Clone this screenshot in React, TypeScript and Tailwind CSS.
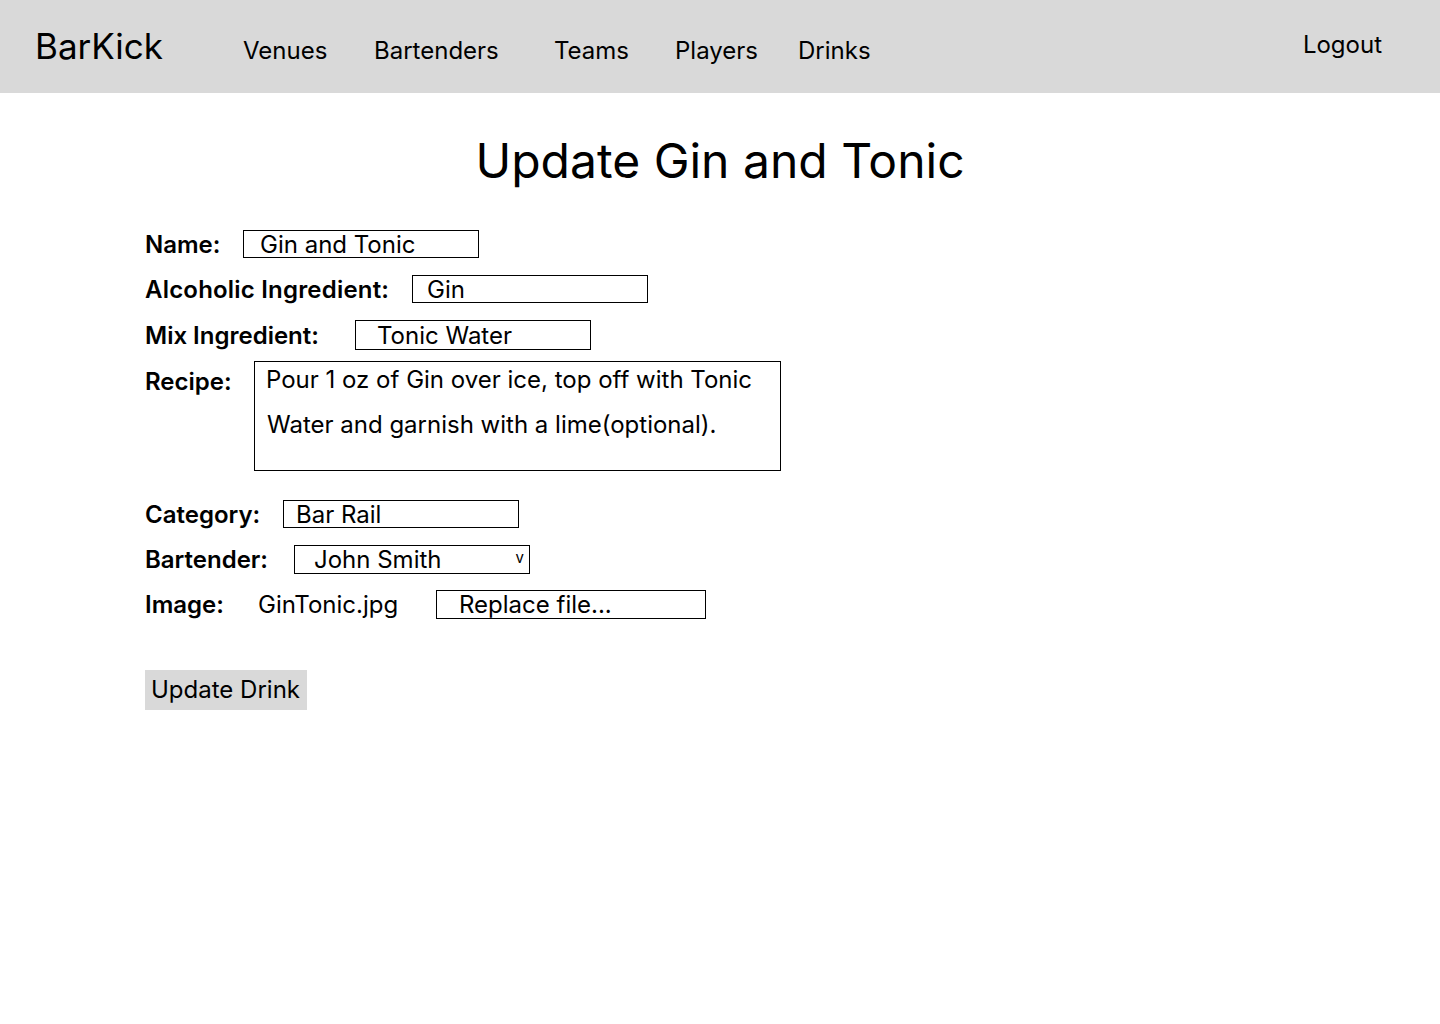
import React from "react";

const font = { fontFamily: "Inter, 'Noto Sans', sans-serif" };

export default function App() {
  return (
    <div className="min-h-[1024px] w-[1440px] bg-white text-black" style={font}>
      <header className="flex h-[93px] items-center bg-[#d9d9d9]">
        <div className="ml-[35px] w-[208px] text-[35px] leading-none pt-[0px]">BarKick</div>
        <nav className="flex items-center text-[24px] leading-none pt-[8px]">
          <span className="w-[131px]">Venues</span>
          <span className="w-[180px]">Bartenders</span>
          <span className="w-[121px]">Teams</span>
          <span className="w-[123px]">Players</span>
          <span>Drinks</span>
        </nav>
        <div className="ml-auto mr-[58px] text-[24px] leading-none -mt-[3px]">Logout</div>
      </header>

      <h1 className="mt-[39px] text-center text-[48px] leading-[58px] font-normal">Update Gin and Tonic</h1>

      <form className="mt-[40px] pl-[145px] text-[24px]">
        <div className="flex h-[28px] items-center">
          <label className="w-[98px] shrink-0 font-semibold pt-[2px]">Name:</label>
          <div className="flex h-[28px] w-[236px] items-center border border-black pl-[16px] pt-[2px]">Gin and Tonic</div>
        </div>
        <div className="mt-[17px] flex h-[28px] items-center">
          <label className="w-[267px] shrink-0 font-semibold pt-[2px] tracking-[0.2px]">Alcoholic Ingredient:</label>
          <div className="flex h-[28px] w-[236px] items-center border border-black pl-[14px] pt-[2px]">Gin</div>
        </div>
        <div className="mt-[17px] flex h-[30px] items-center">
          <label className="w-[210px] shrink-0 font-semibold pt-[1px]">Mix Ingredient:</label>
          <div className="flex h-[30px] w-[236px] items-center border border-black pl-[21px] pt-[1px]">Tonic Water</div>
        </div>
        <div className="mt-[11px] flex items-start">
          <label className="w-[109px] shrink-0 font-semibold mt-[3px]">Recipe:</label>
          <div className="h-[110px] w-[527px] border border-black pl-[11px] pt-[2px]">
            <div className="leading-[32px]">Pour 1 oz of Gin over ice, top off with Tonic</div>
            <div className="leading-[58px] pl-[1px]">Water and garnish with a lime(optional).</div>
          </div>
        </div>
        <div className="mt-[29px] flex h-[28px] items-center">
          <label className="w-[138px] shrink-0 font-semibold pt-[2px]">Category:</label>
          <div className="flex h-[28px] w-[236px] items-center border border-black pl-[12px] pt-[2px]">Bar Rail</div>
        </div>
        <div className="mt-[17px] flex h-[29px] items-center">
          <label className="w-[149px] shrink-0 font-semibold pt-[1px]">Bartender:</label>
          <div className="flex h-[29px] w-[236px] items-center border border-black pl-[19px] pr-[5px] pt-[1px]">
            <span>John Smith</span>
            <span className="ml-auto text-[15px] leading-none -mt-[6px]">v</span>
          </div>
        </div>
        <div className="mt-[16px] flex h-[29px] items-center">
          <label className="w-[113px] shrink-0 font-semibold pt-[1px]">Image:</label>
          <span className="w-[178px] shrink-0 pt-[1px]">GinTonic.jpg</span>
          <div className="flex h-[29px] w-[270px] items-center border border-black pl-[22px] pt-[1px]">Replace file...</div>
        </div>
        <button type="button" className="mt-[51px] flex h-[40px] w-[162px] items-center bg-[#d9d9d9] pl-[6px] text-[24px]">Update Drink</button>
      </form>
    </div>
  );
}
